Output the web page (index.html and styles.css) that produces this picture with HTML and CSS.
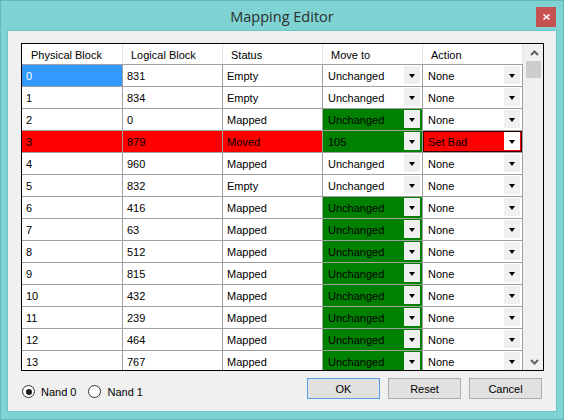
FILE: index.html
```html
<!DOCTYPE html>
<html lang="en">
<head>
    <meta charset="UTF-8">
    <title>Mapping Editor</title>
    <link rel="stylesheet" href="styles.css">
</head>
<body>

<div class="window">
    <div class="titlebar">
        <div class="title">Mapping Editor</div>
        <div class="close">
            <svg width="7" height="6" viewBox="0 0 7 6"><path d="M0.5 0.5 L6.5 5.5 M6.5 0.5 L0.5 5.5" stroke="#fff" stroke-width="1.6"/></svg>
        </div>
    </div>

    <div class="client">
        <div class="grid">
            <div class="table">
                <div class="head">
                    <div class="hcell first">Physical Block</div>
                    <div class="hcell">Logical Block</div>
                    <div class="hcell">Status</div>
                    <div class="hcell">Move to</div>
                    <div class="hcell">Action</div>
                </div>

                <div class="row">
                    <div class="cell first selected">0</div>
                    <div class="cell">831</div>
                    <div class="cell">Empty</div>
                    <div class="cell combo"><span class="val">Unchanged</span><span class="dd"></span></div>
                    <div class="cell combo"><span class="val">None</span><span class="dd"></span></div>
                </div>
                <div class="row">
                    <div class="cell first">1</div>
                    <div class="cell">834</div>
                    <div class="cell">Empty</div>
                    <div class="cell combo"><span class="val">Unchanged</span><span class="dd"></span></div>
                    <div class="cell combo"><span class="val">None</span><span class="dd"></span></div>
                </div>
                <div class="row">
                    <div class="cell first">2</div>
                    <div class="cell">0</div>
                    <div class="cell">Mapped</div>
                    <div class="cell combo green"><span class="val">Unchanged</span><span class="dd"></span></div>
                    <div class="cell combo"><span class="val">None</span><span class="dd"></span></div>
                </div>
                <div class="row bad">
                    <div class="cell first">3</div>
                    <div class="cell">879</div>
                    <div class="cell">Moved</div>
                    <div class="cell combo green"><span class="val">105</span><span class="dd"></span></div>
                    <div class="cell combo editing"><span class="val">Set Bad</span><span class="dd"></span></div>
                </div>
                <div class="row">
                    <div class="cell first">4</div>
                    <div class="cell">960</div>
                    <div class="cell">Mapped</div>
                    <div class="cell combo"><span class="val">Unchanged</span><span class="dd"></span></div>
                    <div class="cell combo"><span class="val">None</span><span class="dd"></span></div>
                </div>
                <div class="row">
                    <div class="cell first">5</div>
                    <div class="cell">832</div>
                    <div class="cell">Empty</div>
                    <div class="cell combo"><span class="val">Unchanged</span><span class="dd"></span></div>
                    <div class="cell combo"><span class="val">None</span><span class="dd"></span></div>
                </div>
                <div class="row">
                    <div class="cell first">6</div>
                    <div class="cell">416</div>
                    <div class="cell">Mapped</div>
                    <div class="cell combo green"><span class="val">Unchanged</span><span class="dd"></span></div>
                    <div class="cell combo"><span class="val">None</span><span class="dd"></span></div>
                </div>
                <div class="row">
                    <div class="cell first">7</div>
                    <div class="cell">63</div>
                    <div class="cell">Mapped</div>
                    <div class="cell combo green"><span class="val">Unchanged</span><span class="dd"></span></div>
                    <div class="cell combo"><span class="val">None</span><span class="dd"></span></div>
                </div>
                <div class="row">
                    <div class="cell first">8</div>
                    <div class="cell">512</div>
                    <div class="cell">Mapped</div>
                    <div class="cell combo green"><span class="val">Unchanged</span><span class="dd"></span></div>
                    <div class="cell combo"><span class="val">None</span><span class="dd"></span></div>
                </div>
                <div class="row">
                    <div class="cell first">9</div>
                    <div class="cell">815</div>
                    <div class="cell">Mapped</div>
                    <div class="cell combo green"><span class="val">Unchanged</span><span class="dd"></span></div>
                    <div class="cell combo"><span class="val">None</span><span class="dd"></span></div>
                </div>
                <div class="row">
                    <div class="cell first">10</div>
                    <div class="cell">432</div>
                    <div class="cell">Mapped</div>
                    <div class="cell combo green"><span class="val">Unchanged</span><span class="dd"></span></div>
                    <div class="cell combo"><span class="val">None</span><span class="dd"></span></div>
                </div>
                <div class="row">
                    <div class="cell first">11</div>
                    <div class="cell">239</div>
                    <div class="cell">Mapped</div>
                    <div class="cell combo green"><span class="val">Unchanged</span><span class="dd"></span></div>
                    <div class="cell combo"><span class="val">None</span><span class="dd"></span></div>
                </div>
                <div class="row">
                    <div class="cell first">12</div>
                    <div class="cell">464</div>
                    <div class="cell">Mapped</div>
                    <div class="cell combo green"><span class="val">Unchanged</span><span class="dd"></span></div>
                    <div class="cell combo"><span class="val">None</span><span class="dd"></span></div>
                </div>
                <div class="row">
                    <div class="cell first">13</div>
                    <div class="cell">767</div>
                    <div class="cell">Mapped</div>
                    <div class="cell combo green"><span class="val">Unchanged</span><span class="dd"></span></div>
                    <div class="cell combo"><span class="val">None</span><span class="dd"></span></div>
                </div>
            </div>

            <div class="scrollbar">
                <div class="sb-btn">
                    <svg width="9" height="6" viewBox="0 0 9 6"><path d="M1 5 L4.5 1.5 L8 5" fill="none" stroke="#606060" stroke-width="2"/></svg>
                </div>
                <div class="thumb"></div>
                <div class="track"></div>
                <div class="sb-btn">
                    <svg width="9" height="6" viewBox="0 0 9 6"><path d="M1 1 L4.5 4.5 L8 1" fill="none" stroke="#606060" stroke-width="2"/></svg>
                </div>
            </div>
        </div>

        <div class="footer">
            <div class="radios">
                <label class="radio"><span class="circle checked"></span>Nand 0</label>
                <label class="radio"><span class="circle"></span>Nand 1</label>
            </div>
            <div class="buttons">
                <button class="btn default">OK</button>
                <button class="btn">Reset</button>
                <button class="btn">Cancel</button>
            </div>
        </div>
    </div>
</div>

</body>
</html>
```

FILE: styles.css
```css
/* Mapping editor dialog, Windows 8 look */
* {
    box-sizing: border-box;
}

body {
    margin: 0;
    font-family: "Liberation Sans", Arial, sans-serif;
    font-size: 11px;
    color: #000;
}

.window {
    width: 564px;
    height: 420px;
    background-color: #7fd3d3;
    border: 1px solid #62b9b9;
    display: flex;
    flex-direction: column;
}

.titlebar {
    height: 29px;
    display: grid;
    grid-template-columns: 1fr auto 1fr;
    align-items: center;
    padding: 0 7px;
}

.title {
    grid-column: 2;
    font-family: "Open Sans", "Noto Sans", sans-serif;
    font-size: 14.5px;
    color: #2e2e2e;
    padding-top: 1px;
}

.close {
    grid-column: 3;
    justify-self: end;
    align-self: start;
    margin-top: 6px;
    width: 20px;
    height: 20px;
    background-color: #c75050;
    display: flex;
    align-items: center;
    justify-content: center;
}

.client {
    flex: 1;
    margin: 0 6px 7px 6px;
    background-color: #f0f0f0;
    border: 1px solid #6cc4c4;
    padding: 12px 0 0 13px;
}

/* data grid */
.grid {
    width: 523px;
    height: 328px;
    border: 1px solid #000;
    display: flex;
    background-color: #fff;
}

.table {
    width: 501px;
    overflow: hidden;
}

.head {
    display: flex;
    height: 21px;
    border-bottom: 1px solid #a0a0a0;
}

.hcell {
    width: 100px;
    padding: 2px 0 0 8px;
    border-right: 1px solid #e3e8ef;
    display: flex;
    align-items: center;
}

.hcell.first {
    width: 101px;
    padding-left: 9px;
}

.row {
    display: flex;
    height: 22px;
}

.cell {
    width: 100px;
    padding: 1px 0 0 4px;
    border-right: 1px solid #a0a0a0;
    border-bottom: 1px solid #a0a0a0;
    display: flex;
    align-items: center;
    white-space: nowrap;
}

.cell.first {
    width: 101px;
}

.cell.selected {
    background-color: #3399ff;
    color: #fff;
}

.combo {
    padding: 0 0 0 5px;
    align-items: stretch;
}

.combo .val {
    flex: 1;
    display: flex;
    align-items: center;
    padding-top: 1px;
}

.dd {
    width: 16px;
    height: 18px;
    margin: 1px 2px 0 0;
    background-color: #f0f0f0;
    display: flex;
    align-items: center;
    justify-content: center;
}

.dd::after {
    content: "";
    border-left: 3px solid transparent;
    border-right: 3px solid transparent;
    border-top: 4px solid #000;
    margin-top: 1px;
}

.green {
    background-color: #008000;
}

.row.bad .cell {
    background-color: #ff0000;
}

.row.bad .cell.green {
    background-color: #008000;
}

.cell.editing {
    box-shadow: inset 0 0 0 1px #3a0000;
}

.cell.editing .dd {
    background-color: #fff;
}

/* scrollbar */
.scrollbar {
    width: 20px;
    background-color: #f0f0f0;
    display: flex;
    flex-direction: column;
}

.sb-btn {
    height: 17px;
    display: flex;
    align-items: center;
    justify-content: center;
    padding-left: 2px;
}

.thumb {
    height: 17px;
    width: 15px;
    margin-left: 3px;
    background-color: #cdcdcd;
}

.track {
    flex: 1;
}

/* bottom row */
.footer {
    width: 523px;
    margin-top: 7px;
    padding: 0 2px 0 1px;
    display: flex;
    align-items: flex-start;
}

.radios {
    display: flex;
    margin-top: 7px;
}

.radio {
    display: flex;
    align-items: center;
    gap: 6px;
    margin-right: 12px;
    height: 13px;
}

.circle {
    width: 13px;
    height: 13px;
    border: 1px solid #333;
    border-radius: 50%;
    background-color: #fff;
    display: flex;
    align-items: center;
    justify-content: center;
}

.circle.checked::after {
    content: "";
    width: 6px;
    height: 6px;
    border-radius: 50%;
    background-color: #1a1a1a;
}

.buttons {
    margin-left: auto;
    display: flex;
    gap: 8px;
}

.btn {
    width: 73px;
    height: 21px;
    padding: 0;
    font-family: "Liberation Sans", Arial, sans-serif;
    font-size: 11px;
    color: #000;
    background-color: #e1e1e1;
    border: 1px solid #adadad;
    border-radius: 0;
}

.btn.default {
    border-color: #569de5;
}
```
